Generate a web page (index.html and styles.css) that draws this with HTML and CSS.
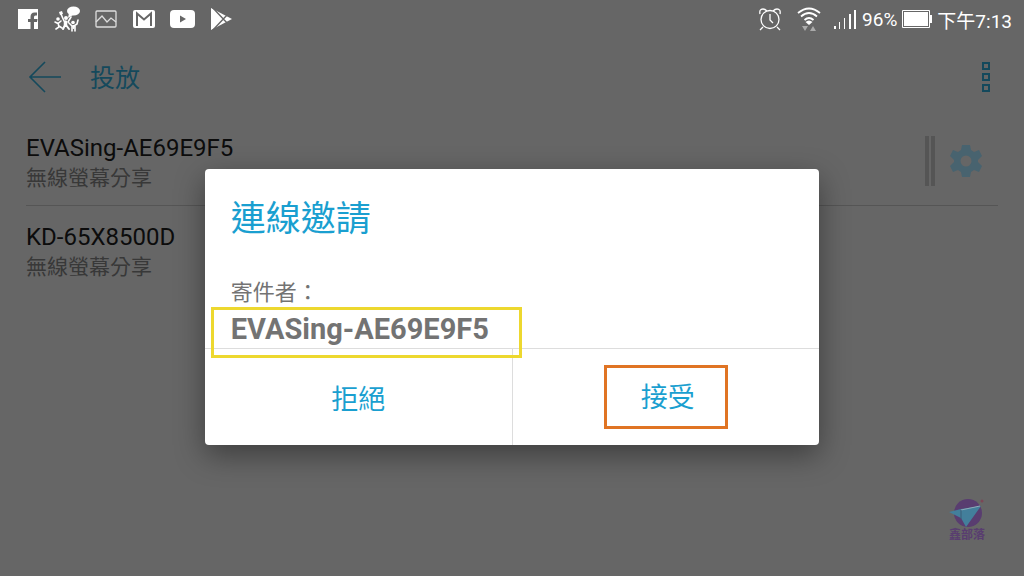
FILE: index.html
```html
<!DOCTYPE html>
<html lang="zh-Hant">
<head>
    <meta charset="UTF-8">
    <meta name="viewport" content="width=device-width, initial-scale=1.0"/>
    <title>投放</title>
    <link rel="stylesheet" href="styles.css">
</head>
<body>
<div class="status-bar">
    <div class="notices">
        <svg width="24" height="24" viewBox="0 0 24 24">
            <path fill="#fff" d="M2 2h20v20h-4v-7h3l.5-3H18v-2q0-1.500 1.500-1.500H21v-3h-2.500Q14.500 5.500 14.500 10v2H12v3h2.500v7H2z"/>
        </svg>
        <svg width="26" height="28" viewBox="0 0 26 28">
            <g fill="#fff">
                <ellipse cx="19.500" cy="6" rx="6.500" ry="4.500"/>
                <path d="M15 8l-1 5 5-3z"/>
                <circle cx="12" cy="13" r="2"/>
                <circle cx="4" cy="14" r="1.800"/>
                <circle cx="19" cy="17.500" r="1.800"/>
                <path d="M5 7l3-1 1 3-3 1z"/>
            </g>
            <g fill="none" stroke="#fff" stroke-width="1.600" stroke-linecap="round">
                <path d="M7 9l3 7M17 12l-3 5M1 17l3 1.500L7 16M4 18l1 4-3 2M5 21l3 2M15 18l3 3h2l3-2 1-4M18 21v5M21 21v5"/>
                <path stroke-width="3.500" d="M11.500 17v3"/>
                <path stroke-width="2" d="M11 20l-2 4M12 20l3 4M19.500 21v2"/>
            </g>
        </svg>
        <svg width="24" height="24" viewBox="0 0 24 24" fill="none" stroke="#ddd">
            <rect x="2" y="4" width="20" height="16" rx="1" stroke-width="1.300"/>
            <path stroke-width="1.300" d="M2 15l6-6 5 6 4-4 5 4"/>
        </svg>
        <svg width="24" height="24" viewBox="0 0 24 24">
            <rect x="1" y="3" width="22" height="18" rx="2" fill="#fff"/>
            <path fill="none" stroke="#666" stroke-width="2" d="M5 19V6.500l7 6 7-6V19"/>
        </svg>
        <svg width="26" height="24" viewBox="0 0 26 24">
            <rect x="0" y="3" width="25" height="18" rx="4" fill="#fff"/>
            <path fill="#666" d="M10 8.500l6 3.500-6 3.500z"/>
        </svg>
        <svg width="24" height="24" viewBox="0 0 24 24">
            <path fill="#fff" d="M1 1l21 11L1 23z"/>
            <path fill="none" stroke="#666" stroke-width="1.400" d="M2 0l16 17M2 24L18 7"/>
        </svg>
    </div>
    <div class="system">
        <svg class="alarm" width="24" height="24" viewBox="0 0 24 24" fill="none" stroke="#fff" stroke-width="1.300">
            <circle cx="12" cy="12.500" r="9"/>
            <path d="M12 7v6l3 3M5 20l-3 3M19 20l3 3M2 7q-1-5 3-5 2 0 4 2M22 7q1-5-3-5-2 0-4 2"/>
        </svg>
        <svg class="wifi" width="24" height="26" viewBox="0 0 24 26">
            <g fill="none" stroke="#fff" stroke-width="1.800">
                <path d="M1 7q11-9 22 0M4 10.500q8-7 16 0M7.500 14q4.500-4 9 0"/>
            </g>
            <path fill="#fff" d="M8.500 16q3.500-3 7 0L12 19z"/>
            <path fill="#aaa" d="M5 20h6l-3 5zM13 25h6l-3-5z"/>
        </svg>
        <svg class="signal" width="24" height="22" viewBox="0 0 24 22">
            <path fill="#fff" d="M1 18h2v3H1zM6 14h1v7H6zM11 10h1v11h-1zM16 6h2v15h-2zM21 2h2v19h-2z"/>
        </svg>
        <span>96%</span>
        <svg class="battery" width="30" height="20" viewBox="0 0 30 20">
            <path fill="none" stroke="#fff" d="M.5 1.500h27v17H.5z"/>
            <path fill="#fff" d="M2 3h24v14H2zM28 6h2v8h-2z"/>
        </svg>
        <span>下午7:13</span>
    </div>
</div>

<div class="title-bar">
    <button class="icon-btn back" aria-label="返回">
        <svg width="34" height="34" viewBox="0 0 34 34" fill="none" stroke="currentColor" stroke-width="1.600">
            <path d="M33 17H2M17 2L2 17l15 15"/>
        </svg>
    </button>
    <h1>投放</h1>
    <button class="icon-btn more" aria-label="更多">
        <svg width="8" height="30" viewBox="0 0 8 30" fill="none" stroke="currentColor" stroke-width="2">
            <path d="M1 1h6v6H1zM1 12h6v6H1zM1 23h6v6H1z"/>
        </svg>
    </button>
</div>

<ul class="devices">
    <li>
        <div class="device">
            <div class="name">EVASing-AE69E9F5</div>
            <div class="kind">無線螢幕分享</div>
        </div>
        <span class="divider"></span>
        <button class="icon-btn gear" aria-label="設定">
            <svg width="32" height="32" viewBox="0 0 32 32">
                <path fill="currentColor" fill-rule="evenodd" d="M12 0h8l1 5 3 2 5-2 3 6-4 4v2l4 4-3 6-5-2-3 2-1 5h-8l-1-5-3-2-5 2-3-6 4-4v-2l-4-4 3-6 5 2 3-2zM16 10.500a5.500 5.500 0 1 0 0 11 5.500 5.500 0 0 0 0-11z"/>
            </svg>
        </button>
    </li>
    <li>
        <div class="device">
            <div class="name">KD-65X8500D</div>
            <div class="kind">無線螢幕分享</div>
        </div>
    </li>
</ul>

<div class="logo">
    <svg width="38" height="29" viewBox="0 0 38 29">
        <circle cx="20" cy="14" r="14" fill="#593d70"/>
        <path fill="#437f9b" d="M1 13l12-3 20-3-15 21-5-9z"/>
        <path fill="none" stroke="#8fa9b8" d="M13 11l19-4"/>
        <path fill="none" stroke="#3a5f78" d="M13 11v9"/>
        <circle cx="34" cy="2" r="1.500" fill="#7c4656"/>
    </svg>
    <span>鑫部落</span>
</div>

<div class="overlay">
    <div class="dialog" role="dialog" aria-labelledby="dialog-title">
        <h2 id="dialog-title">連線邀請</h2>
        <div class="sender">
            <p>寄件者：</p>
            <strong class="mark-name">EVASing-AE69E9F5</strong>
        </div>
        <div class="actions">
            <button>拒絕</button>
            <button><span class="mark-accept">接受</span></button>
        </div>
    </div>
</div>
</body>
</html>
```

FILE: styles.css
```css
* {
    box-sizing: border-box;
    margin: 0;
    padding: 0;
}
:root {
    --bg: #666;
    --teal: #14495c;
    --blue: #1a9fd0;
    --line: #ddd;
}
body {
    min-height: 100vh;
    position: relative;
    background: var(--bg);
    font-family: Roboto, "Noto Sans CJK TC", sans-serif;
}
svg {
    display: block;
    flex: none;
}
button {
    border: 0;
    background: none;
    font: inherit;
    cursor: pointer;
}

/* status bar */
.status-bar {
    display: flex;
    justify-content: space-between;
    align-items: center;
    height: 38px;
    padding: 0 12px 0 16px;
    color: #fff;
    font-size: 19px;
}
.notices,
.system {
    display: flex;
    align-items: center;
}
.notices {
    gap: 14px;
}
.system {
    gap: 5px;
}
.alarm {
    margin-right: 10px;
}
.wifi {
    margin-right: 7px;
}

/* title bar */
.title-bar {
    display: flex;
    align-items: center;
    height: 78px;
    padding: 0 34px 0 28px;
    color: var(--teal);
}
.title-bar h1 {
    flex: 1;
    margin-left: 28px;
    padding-bottom: 2px;
    font-size: 25px;
    font-weight: 400;
}
.icon-btn {
    color: inherit;
}

/* device list */
.devices {
    padding: 0 26px;
    list-style: none;
}
.devices li {
    display: flex;
    align-items: center;
    height: 89px;
}
.devices li + li {
    border-top: 1px solid #555;
}
.device {
    flex: 1;
    padding-top: 4px;
}
.name {
    color: #0c0c0c;
    font-size: 24px;
    line-height: 30px;
}
.kind {
    color: #383838;
    font-size: 21px;
    line-height: 30px;
}
.divider {
    width: 10px;
    height: 50px;
    margin-right: 15px;
    border: solid #555;
    border-width: 0 4px;
}
.gear {
    margin-right: 16px;
    color: #48636f;
}

/* logo in the corner */
.logo {
    position: absolute;
    right: 38px;
    bottom: 34px;
    display: flex;
    flex-direction: column;
    align-items: center;
    color: #593d70;
    font-size: 12px;
    font-weight: 700;
    line-height: 14px;
}

/* dialog */
.overlay {
    position: absolute;
    top: 38px;
    right: 0;
    bottom: 0;
    left: 0;
    display: flex;
    align-items: center;
    justify-content: center;
}
.dialog {
    width: 60%;
    border-radius: 4px;
    background: #fff;
    box-shadow: 0 10px 30px rgba(0, 0, 0, 0.4);
}
.dialog h2 {
    padding: 26px 26px 0;
    color: var(--blue);
    font-size: 35px;
    font-weight: 400;
    line-height: 50px;
}
.sender {
    padding: 34px 6px 0;
    color: #737373;
}
.sender p {
    padding: 0 20px;
    font-size: 22px;
    line-height: 28px;
}
/* the frame runs over the line above the buttons */
.mark-name {
    position: relative;
    display: inline-block;
    margin-bottom: -10px;
    padding: 1px 30px 7px 17px;
    border: 3px solid #edd82f;
    font-size: 29px;
    line-height: 37px;
    vertical-align: top;
}
.actions {
    display: flex;
    border-top: 1px solid var(--line);
}
.actions button {
    flex: 1;
    height: 96px;
    color: var(--blue);
    font-size: 27px;
}
.actions button + button {
    border-left: 1px solid var(--line);
}
.mark-accept {
    display: inline-block;
    padding: 10px 30px 8px 34px;
    border: 3px solid #e07423;
    line-height: 40px;
}
```
